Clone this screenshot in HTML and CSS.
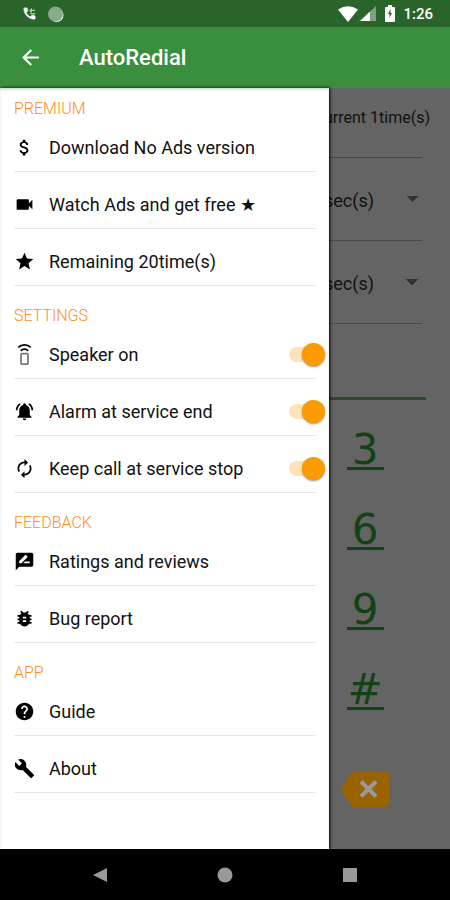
FILE: index.html
```html
<!DOCTYPE html>
<html lang="en">
<head>
<meta charset="utf-8">
<meta name="viewport" content="width=device-width, initial-scale=1">
<title>AutoRedial</title>
<link rel="stylesheet" href="styles.css">
</head>
<body>
<div class="status">
  <svg class="status-call" viewBox="0 0 24 24" aria-hidden="true"><path d="M20 15.500c-1.250 0-2.450-.2-3.570-.57a1 1 0 0 0-1.020.24l-2.200 2.200a15 15 0 0 1-6.590-6.580l2.200-2.210a1 1 0 0 0 .25-1.010A11.400 11.400 0 0 1 8.500 4a1 1 0 0 0-1-1H4a1 1 0 0 0-1 1c0 9.390 7.610 17 17 17a1 1 0 0 0 1-1v-3.500a1 1 0 0 0-1-1z" stroke="currentColor"/><path d="M11 7l5-4v3h5v2h-5v3zM22 12l-4 3v-2h-5v-2h5z" opacity=".65"/></svg>
  <svg class="status-sync" viewBox="0 0 18 18" aria-hidden="true"><circle cx="9.500" cy="10" r="7"/><circle class="sync-disc" cx="8.500" cy="9" r="7.500"/></svg>
  <svg class="status-wifi" viewBox="0 0 20 16" aria-hidden="true"><path d="M0 3.500Q10-3 20 3.500L10 16z"/></svg>
  <svg class="status-signal" viewBox="0 0 16 15" aria-hidden="true"><path d="M0 15L16 0v15z" opacity=".4"/><path d="M0 15L10 5.600V15z"/></svg>
  <svg class="status-battery" viewBox="0 0 10 17" aria-hidden="true"><path d="M3 0h4v2h2q1 0 1 1v13q0 1-1 1H1q-1 0-1-1V3q0-1 1-1h2z"/><path class="bolt" d="M5.500 4L3 9h1.500v4L7 8H5.500z"/></svg>
  <span class="clock">1:26</span>
</div>
<header class="appbar">
  <button class="back" type="button" aria-label="Back"><svg viewBox="0 0 24 24"><path d="M20 11H7.830l5.590-5.590L12 4l-8 8 8 8 1.410-1.410L7.830 13H20z"/></svg></button>
  <h1>AutoRedial</h1>
</header>
<main class="stage">
  <section class="dialer">
    <p class="count">Current 1time(s)</p>
    <div class="field">
      <select aria-label="Call interval"><option>sec(s)</option></select>
    </div>
    <div class="field">
      <select aria-label="Call duration"><option>sec(s)</option></select>
    </div>
    <input class="number" type="tel" aria-label="Phone number">
    <div class="keys">
      <button type="button">3</button>
      <button type="button">6</button>
      <button type="button">9</button>
      <button type="button">#</button>
      <button class="erase" type="button" aria-label="Delete"><svg viewBox="0 0 48 36"><path class="erase-body" d="M13 0h31q4 0 4 4v28q0 4-4 4H13q-2 0-3-2L1 20q-1-2 0-4L10 2q1-2 3-2z"/><path class="erase-x" d="M20 10.500l15 15M35 10.500l-15 15"/></svg></button>
    </div>
  </section>
  <nav class="drawer">
    <section>
      <h2>PREMIUM</h2>
      <ul>
        <li><a href="#noads"><svg viewBox="0 0 24 24"><path d="M11.800 10.900c-2.270-.59-3-1.200-3-2.150 0-1.090 1.010-1.850 2.700-1.850 1.780 0 2.440.85 2.500 2.100h2.210c-.07-1.720-1.120-3.300-3.210-3.810V3h-3v2.160c-1.940.42-3.500 1.680-3.500 3.610 0 2.310 1.910 3.460 4.700 4.130 2.500.6 3 1.480 3 2.410 0 .69-.49 1.790-2.700 1.790-2.060 0-2.870-.92-2.980-2.100h-2.200c.12 2.190 1.760 3.420 3.680 3.830V21h3v-2.150c1.950-.37 3.500-1.500 3.500-3.550 0-2.840-2.430-3.810-4.700-4.400z"/></svg>Download No Ads version</a></li>
        <li><a href="#watch"><svg viewBox="0 0 24 24"><path d="M17 10.500V7c0-.55-.45-1-1-1H4c-.55 0-1 .45-1 1v10c0 .55.45 1 1 1h12c.55 0 1-.45 1-1v-3.500l4 4v-11z"/></svg>Watch Ads and get free ★</a></li>
        <li><a href="#remaining"><svg viewBox="0 0 24 24"><path d="M12 17.270L18.180 21l-1.640-7.030L22 9.240l-7.190-.61L12 2 9.190 8.630 2 9.240l5.460 4.730L5.820 21z"/></svg>Remaining 20time(s)</a></li>
      </ul>
    </section>
    <section>
      <h2>SETTINGS</h2>
      <ul>
        <li><label><svg viewBox="0 0 24 24"><path d="M7.050 7.050l1.410 1.410a5 5 0 0 1 7.080 0l1.410-1.410a7 7 0 0 0-9.900 0zM12 0a11 11 0 0 0-7.780 3.220l1.410 1.410a9 9 0 0 1 12.730 0l1.410-1.410A11 11 0 0 0 12 0z"/><rect class="remote" x="8" y="11" width="8" height="12" rx="1"/></svg><span>Speaker on</span><input type="checkbox" checked></label></li>
        <li><label><svg viewBox="0 0 24 24"><path d="M7.580 4.080L6.150 2.650C3.750 4.480 2.170 7.300 2.030 10.500h2c.15-2.650 1.510-4.970 3.550-6.420zm12.390 6.420h2c-.15-3.200-1.730-6.020-4.120-7.850l-1.420 1.430c2.020 1.450 3.390 3.770 3.540 6.420zM18 11c0-3.070-1.640-5.640-4.500-6.320V4c0-.83-.67-1.500-1.500-1.500s-1.500.67-1.500 1.500v.68C7.630 5.360 6 7.920 6 11v5l-2 2v1h16v-1l-2-2zm-6 11c1.100 0 2-.9 2-2h-4c0 1.100.9 2 2 2z"/></svg><span>Alarm at service end</span><input type="checkbox" checked></label></li>
        <li><label><svg viewBox="0 0 24 24"><path d="M12 6v3l4-4-4-4v3c-4.420 0-8 3.580-8 8 0 1.570.46 3.030 1.240 4.260L6.700 14.800c-.45-.83-.7-1.790-.7-2.800 0-3.310 2.690-6 6-6zm6.760 1.740L17.300 9.200c.44.84.7 1.790.7 2.800 0 3.310-2.690 6-6 6v-3l-4 4 4 4v-3c4.420 0 8-3.580 8-8 0-1.570-.46-3.030-1.240-4.260z"/></svg><span>Keep call at service stop</span><input type="checkbox" checked></label></li>
      </ul>
    </section>
    <section>
      <h2>FEEDBACK</h2>
      <ul>
        <li><a href="#reviews"><svg viewBox="0 0 24 24"><path d="M20 2H4c-1.100 0-1.990.9-1.990 2L2 22l4-4h14c1.100 0 2-.9 2-2V4c0-1.100-.9-2-2-2zM6 14v-2.470l6.880-6.880c.2-.2.51-.2.71 0l1.770 1.770c.2.2.2.51 0 .71L8.470 14H6zm12 0h-7.500l2-2H18z"/></svg>Ratings and reviews</a></li>
        <li><a href="#bug"><svg viewBox="0 0 24 24"><path d="M20 8h-2.810c-.45-.78-1.070-1.450-1.820-1.960L17 4.410 15.590 3l-2.170 2.170C12.960 5.060 12.490 5 12 5c-.49 0-.96.06-1.410.17L8.410 3 7 4.410l1.620 1.630C7.880 6.550 7.260 7.220 6.810 8H4v2h2.090c-.05.33-.09.66-.09 1v1H4v2h2v1c0 .34.04.67.09 1H4v2h2.810c1.040 1.790 2.970 3 5.190 3s4.150-1.210 5.190-3H20v-2h-2.090c.05-.33.09-.66.09-1v-1h2v-2h-2v-1c0-.34-.04-.67-.09-1H20zm-6 8h-4v-2h4zm0-4h-4v-2h4z"/></svg>Bug report</a></li>
      </ul>
    </section>
    <section>
      <h2>APP</h2>
      <ul>
        <li><a href="#guide"><svg viewBox="0 0 24 24"><path d="M12 2C6.480 2 2 6.480 2 12s4.480 10 10 10 10-4.480 10-10S17.520 2 12 2zm1 17h-2v-2h2zm2.070-7.750l-.9.920C13.450 12.900 13 13.500 13 15h-2v-.5c0-1.100.45-2.100 1.170-2.830l1.240-1.260c.37-.36.59-.86.59-1.410 0-1.100-.9-2-2-2s-2 .9-2 2H8c0-2.210 1.790-4 4-4s4 1.790 4 4c0 .88-.36 1.680-.93 2.250z"/></svg>Guide</a></li>
        <li><a href="#about"><svg viewBox="0 0 24 24"><path d="M22.700 19l-9.100-9.100c.9-2.300.4-5-1.500-6.900-2-2-5-2.400-7.400-1.300L9 6 6 9 1.600 4.700C.4 7.100.9 10.100 2.900 12.100c1.900 1.900 4.600 2.400 6.900 1.500l9.100 9.100c.4.4 1 .4 1.400 0l2.300-2.300c.5-.4.5-1.100.1-1.400z"/></svg>About</a></li>
      </ul>
    </section>
  </nav>
</main>
<footer class="sysnav">
  <button type="button" aria-label="System back"><svg viewBox="0 0 16 16"><path d="M15 1v14L1 8z"/></svg></button>
  <button type="button" aria-label="Home"><svg viewBox="0 0 16 16"><circle cx="8" cy="8" r="7.500"/></svg></button>
  <button type="button" aria-label="Recent apps"><svg viewBox="0 0 16 16"><path d="M1 1h14v14H1z"/></svg></button>
</footer>
</body>
</html>
```
FILE: styles.css
```css
* {
  box-sizing: border-box;
}

body {
  margin: 0;
  min-height: 100vh;
  display: flex;
  flex-direction: column;
  background: #000;
  color: #111;
  font-family: Roboto, "Liberation Sans", sans-serif;
  font-size: 18px;
}

h1, h2, p, ul {
  margin: 0;
  padding: 0;
  font-weight: 400;
}

ul {
  list-style: none;
}

button {
  margin: 0;
  padding: 0;
  border: 0;
  background: none;
  color: inherit;
  font: inherit;
}

svg {
  display: block;
  flex: none;
  fill: currentColor;
}

/* status bar */
.status {
  height: 27px;
  display: flex;
  align-items: center;
  padding: 0 17px 0 22px;
  background: #29642b;
  color: #fff;
}

.status-call {
  width: 15px;
  height: 15px;
}

.status-sync {
  width: 18px;
  height: 18px;
  margin-left: 10px;
}

.sync-disc {
  fill: #8aab8b;
}

.status-wifi {
  width: 20px;
  height: 16px;
  margin-left: auto;
}

.status-signal {
  width: 16px;
  height: 15px;
  margin-left: 2px;
}

.status-battery {
  width: 10px;
  height: 17px;
  margin: 0 8px 0 9px;
}

.bolt {
  fill: #29642b;
}

.clock {
  font-size: 15px;
  font-weight: 500;
}

/* app bar */
.appbar {
  height: 61px;
  display: flex;
  align-items: center;
  padding-left: 18px;
  background: #398f3d;
  color: #fff;
}

.back svg {
  width: 25px;
  height: 25px;
}

.appbar h1 {
  margin-left: 36px;
  font-size: 22px;
  font-weight: 500;
}

/* drawer and dialer share one grid cell */
.stage {
  flex: 1;
  display: grid;
  background: #646464;
}

.dialer,
.drawer {
  grid-area: 1 / 1;
}

.drawer {
  width: 73%;
  z-index: 1;
  display: flex;
  flex-direction: column;
  gap: 20px;
  padding: 11px 13px 20px 14px;
  background: #fff;
  box-shadow: 1px 0 3px #000, inset 0 2px 2px #ddd;
  font-weight: 300;
}

.drawer h2 {
  margin-bottom: 5px;
  color: #ff8c1a;
  font-size: 16px;
  font-weight: 300;
  line-height: 20px;
}

.drawer ul {
  display: grid;
  gap: 9px;
}

.drawer li {
  height: 48px;
  border-bottom: 1px solid #e8e8e8;
}

.drawer a,
.drawer label {
  height: 100%;
  display: flex;
  align-items: center;
  gap: 13px;
  color: inherit;
  text-decoration: none;
}

.drawer svg {
  width: 21px;
  height: 21px;
  margin-right: 1px;
  color: #000;
}

.remote {
  fill: none;
  stroke: #777;
  stroke-width: 2;
}

.drawer input {
  appearance: none;
  display: flex;
  align-items: center;
  width: 36px;
  height: 23px;
  margin: 0 -9px 0 auto;
}

.drawer input::before {
  content: "";
  width: 24px;
  height: 15px;
  margin-right: -11px;
  border-radius: 8px 0 0 8px;
  background: #ffe3b8;
}

.drawer input::after {
  content: "";
  width: 23px;
  height: 23px;
  border-radius: 50%;
  background: #fb9b00;
  box-shadow: 0 1px 2px #0006;
}

/* dimmed dialer behind the drawer */
.dialer {
  display: flex;
  flex-direction: column;
  padding: 0 28px;
}

.count {
  height: 70px;
  margin-right: -8px;
  padding-top: 20px;
  background: linear-gradient(#484848, #484848) left bottom / calc(100% - 8px) 1px no-repeat;
  font-size: 16px;
  line-height: 20px;
  text-align: right;
}

.field {
  height: 83px;
  display: flex;
  border-bottom: 1px solid #484848;
}

.field select {
  appearance: none;
  flex: 1;
  padding: 2px 48px 0 0;
  border: 0;
  background: conic-gradient(from -45deg at 50% 100%, #333 90deg, #0000 0) right 4px center / 12px 6px no-repeat;
  color: inherit;
  font: inherit;
  text-align: right;
  text-align-last: right;
}

.number {
  height: 76px;
  margin-right: -4px;
  border: 0;
  border-bottom: 3px solid #2c4a2e;
  background: none;
  color: inherit;
  font: inherit;
}

.keys {
  align-self: flex-end;
  display: grid;
  grid-auto-rows: 40px;
  gap: 40px;
  justify-items: center;
  margin: 30px 33px 0 0;
  color: #114315;
}

.keys button {
  width: 37px;
  height: 40px;
  border-bottom: 3px solid;
  font-family: "DejaVu Sans", sans-serif;
  font-size: 42px;
  line-height: 40px;
}

.keys .erase {
  width: 48px;
  height: 36px;
  margin-top: 21px;
  border: 0;
}

.erase-body {
  fill: #9b6300;
}

.erase-x {
  fill: none;
  stroke: #999;
  stroke-width: 4;
}

/* system navigation */
.sysnav {
  height: 51px;
  display: flex;
  align-items: center;
  justify-content: space-between;
  padding: 0 92px;
  color: #999;
}

.sysnav svg {
  width: 16px;
  height: 16px;
}
```
